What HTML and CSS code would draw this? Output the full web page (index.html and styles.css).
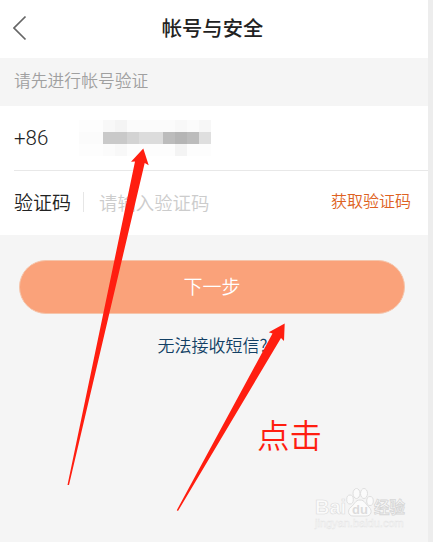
FILE: index.html
```
<!DOCTYPE html>
<html lang="zh-CN">
<head>
    <meta charset="UTF-8">
    <meta name="viewport" content="width=device-width, initial-scale=1.0">
    <title>帐号与安全</title>
    <link rel="stylesheet" href="styles.css">
</head>
<body>
    <div class="screen">
        <header class="header">
            <svg class="back" width="15" height="26" viewBox="0 0 15 26">
                <path d="M12.5 1.5 L1 13 L12.5 24.5" fill="none" stroke="#666" stroke-width="1.7"/>
            </svg>
            <h1>帐号与安全</h1>
        </header>
        <p class="notice">请先进行帐号验证</p>

        <div class="form">
            <div class="row phone-row">
                <span class="prefix">+86</span>
                <svg class="masked" width="132" height="36" viewBox="0 0 11 3" shape-rendering="crispEdges">
                    <path fill="#fdfdfd" d="M0 0h2v1H0z M0 2h11v1H0z"/>
                    <path fill="#fbfbfb" d="M2 0h9v1H2z M0 1h2v1H0z M2 2h1v1H2z"/>
                    <path fill="#f8f8f8" d="M2 0h1v1H2z M8 0h1v1H8z M3 2h1v1H3z"/>
                    <path fill="#f4f4f4" d="M3 0h1v1H3z M8 2h1v1H8z"/>
                    <path fill="#f7f7f7" d="M10 0h1v1H10z"/>
                    <path fill="#c9c9c9" d="M2 1h2v1H2z"/>
                    <path fill="#d3d3d3" d="M4 1h1v1H4z"/>
                    <path fill="#dcdcdc" d="M5 1h2v1H5z"/>
                    <path fill="#bcbcbc" d="M7 1h3v1H7z"/>
                    <path fill="#b5b5b5" d="M8 1h1v1H8z"/>
                    <path fill="#dfdfdf" d="M10 1h1v1H10z"/>
                </svg>
            </div>
            <div class="row code-row">
                <span class="label">验证码</span>
                <span class="placeholder">请输入验证码</span>
                <span class="get-code">获取验证码</span>
            </div>
        </div>

        <button class="next">下一步</button>
        <a class="help">无法接收短信?</a>
    </div>

    <svg class="arrows" width="433" height="542" viewBox="0 0 433 542">
        <path fill="#ff1e10" d="M143.3 148.5 L148.7 165.3 L144.7 163 L69 485 L67.5 485 L135 161.5 L131 161.7 Z"/>
        <path fill="#ff1e10" d="M284.7 323.5 L284 341 L281 338 L178 511 L176.8 510.2 L272.5 333.5 L268.8 332.3 Z"/>
    </svg>
    <div class="tap-note">点击</div>

    <div class="watermark">
        <div class="brand">
            <span class="bai">Bai</span>
            <svg class="paw" width="28" height="29" viewBox="0 0 28 29">
                <g fill="#fbfbfb" stroke="#dedede" stroke-width="1">
                    <ellipse cx="4" cy="11.5" rx="3.3" ry="4.5"/>
                    <ellipse cx="10.5" cy="5.5" rx="3.5" ry="5"/>
                    <ellipse cx="18" cy="5.5" rx="3.5" ry="5"/>
                    <ellipse cx="24" cy="13" rx="3.3" ry="4.5"/>
                    <path d="M14 12 C19 12 19 16 23 19 C27 23 25 28 20 28 H7 C2 28 1 22 5 19 C9 16 9 12 14 12 Z"/>
                </g>
                <text x="14" y="26" text-anchor="middle">du</text>
            </svg>
            <span class="jingyan">经验</span>
        </div>
        <div class="site">jingyan.baidu.com</div>
    </div>
</body>
</html>
```
FILE: styles.css
```
* {
    box-sizing: border-box;
}

body {
    margin: 0;
    height: 542px;
    position: relative;
    overflow: hidden;
    background: #ededed;
    font-family: "Noto Sans CJK SC", sans-serif;
    font-weight: 350;
}

.screen {
    width: 428px;
    height: 542px;
    background: #f5f5f5;
    display: flex;
    flex-direction: column;
}

.header {
    height: 58px;
    padding: 0 13px 2px;
    background: #fff;
    display: grid;
    grid-template-columns: 15px 1fr 15px;
    align-items: center;
}

h1 {
    margin: 0;
    padding: 0 3px 2px 0;
    text-align: center;
    font-size: 20.3px;
    font-weight: 500;
    color: #222;
}

.notice {
    margin: 0;
    height: 48px;
    padding-left: 14px;
    line-height: 45px;
    font-size: 16.8px;
    color: #a0a0a0;
}

.form {
    height: 129px;
    background: #fff;
}

.row {
    display: flex;
    align-items: center;
    margin-left: 14px;
}

.phone-row {
    height: 65px;
    border-bottom: 1px solid #e8e8e8;
}

.prefix {
    width: 65px;
    font-family: Roboto, sans-serif;
    font-weight: 300;
    font-size: 20.5px;
    color: #222;
}

.code-row {
    height: 64px;
    padding: 0 17px 2px 0;
}

.label {
    width: 70px;
    font-size: 19px;
    line-height: 20px;
    color: #222;
    border-right: 1px solid #e6e6e6;
    white-space: nowrap;
}

.placeholder {
    padding-left: 15px;
    font-size: 18.4px;
    color: #ccc;
}

.get-code {
    margin-left: auto;
    padding-bottom: 4px;
    font-size: 16px;
    color: #de6222;
}

.next {
    margin: 25px 23px 0 19px;
    height: 54px;
    padding: 0 0 3px;
    border: 1px solid #f5c5ab;
    border-radius: 27px;
    background: #faa27a;
    color: #fff;
    font-family: inherit;
    font-weight: 350;
    font-size: 19px;
}

.help {
    margin-top: 18px;
    padding-right: 3px;
    text-align: center;
    font-size: 17px;
    line-height: 25px;
    color: #123f64;
}

.arrows {
    position: absolute;
    left: 0;
    top: 0;
}

.tap-note {
    position: absolute;
    left: 257px;
    top: 411px;
    font-size: 32.5px;
    line-height: 46px;
    color: #ff1e10;
}

/* watermark in the corner */
.watermark {
    position: absolute;
    left: 315px;
    top: 488px;
    color: #fbfbfb;
    -webkit-text-stroke: 0.6px #dcdcdc;
}

.brand {
    display: flex;
    align-items: flex-end;
    height: 29px;
}

.bai {
    width: 31px;
    font: bold 20px/20px "Liberation Sans", sans-serif;
}

.paw {
    flex: none;
}

.paw text {
    font: bold 13px "Liberation Sans", sans-serif;
    fill: #dcdcdc;
    stroke: none;
}

.jingyan {
    font-size: 15.5px;
    font-weight: 700;
    line-height: 22px;
    color: #f8f8f8;
    -webkit-text-stroke: 0.8px #d6d6d6;
}

.site {
    font: 11px/13px "Liberation Sans", sans-serif;
    -webkit-text-stroke: 0.4px #e4e4e4;
}
```
